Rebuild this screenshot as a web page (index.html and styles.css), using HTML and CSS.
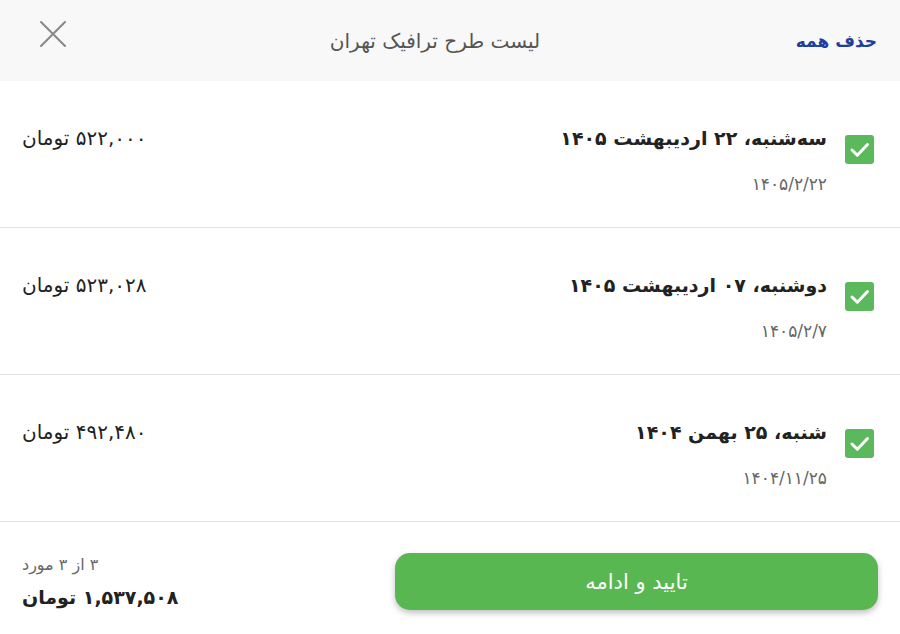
FILE: index.html
```html
<!DOCTYPE html>
<html lang="fa" dir="rtl">
<head>
<meta charset="utf-8">
<title>لیست طرح ترافیک تهران</title>
<link rel="stylesheet" href="styles.css">
</head>
<body>
<div class="page">
  <header class="header">
    <a class="clear-all">حذف همه</a>
    <div class="title">لیست طرح ترافیک تهران</div>
    <button class="close" aria-label="بستن">
      <svg width="28" height="28" viewBox="0 0 28 28"><path d="M2 2 L26 26 M26 2 L2 26" stroke="#8a8a8a" stroke-width="2.1" stroke-linecap="round" fill="none"/></svg>
    </button>
  </header>

  <ul class="list">
    <li class="row">
      <span class="check"><svg width="29" height="29" viewBox="0 0 29 29"><path d="M7 15 L12.3 20.2 L22.5 9.5" stroke="#fff" stroke-width="3" stroke-linecap="round" stroke-linejoin="round" fill="none"/></svg></span>
      <div class="info">
        <div class="day">سه‌شنبه، ۲۲ اردیبهشت ۱۴۰۵</div>
        <div class="date">۱۴۰۵/۲/۲۲</div>
      </div>
      <div class="price">۵۲۲,۰۰۰ تومان</div>
    </li>
    <li class="row">
      <span class="check"><svg width="29" height="29" viewBox="0 0 29 29"><path d="M7 15 L12.3 20.2 L22.5 9.5" stroke="#fff" stroke-width="3" stroke-linecap="round" stroke-linejoin="round" fill="none"/></svg></span>
      <div class="info">
        <div class="day">دوشنبه، ۰۷ اردیبهشت ۱۴۰۵</div>
        <div class="date">۱۴۰۵/۲/۷</div>
      </div>
      <div class="price">۵۲۳,۰۲۸ تومان</div>
    </li>
    <li class="row">
      <span class="check"><svg width="29" height="29" viewBox="0 0 29 29"><path d="M7 15 L12.3 20.2 L22.5 9.5" stroke="#fff" stroke-width="3" stroke-linecap="round" stroke-linejoin="round" fill="none"/></svg></span>
      <div class="info">
        <div class="day">شنبه، ۲۵ بهمن ۱۴۰۴</div>
        <div class="date">۱۴۰۴/۱۱/۲۵</div>
      </div>
      <div class="price">۴۹۲,۴۸۰ تومان</div>
    </li>
  </ul>

  <footer class="footer">
    <button class="confirm">تایید و ادامه</button>
    <div class="summary">
      <div class="count">۳ از ۳ مورد</div>
      <div class="total">۱,۵۳۷,۵۰۸ تومان</div>
    </div>
  </footer>
</div>
</body>
</html>
```

FILE: styles.css
```css
* { box-sizing: border-box; }
html, body { margin: 0; padding: 0; }
body {
  font-family: "DejaVu Sans", "Noto Sans", sans-serif;
  background: #ffffff;
  color: #222;
  width: 900px;
  height: 634px;
  overflow: hidden;
}
.page {
  display: flex;
  flex-direction: column;
  height: 634px;
}
.header {
  height: 81px;
  background: #f8f8f8;
  display: flex;
  align-items: center;
  justify-content: space-between;
  padding: 0 23px 0 39px;
}
.clear-all {
  color: #1f3f9c;
  font-size: 17px;
  font-weight: bold;
  width: 110px;
  text-align: right;
}
.title {
  color: #555;
  font-size: 20px;
  flex: 1;
  text-align: center;
  padding-right: 46px;
}
.close {
  border: 0;
  background: none;
  padding: 0;
  width: 110px;
  display: flex;
  justify-content: flex-end;
  margin-top: -14px;
}
.close svg { display: block; }
.list {
  list-style: none;
  margin: 0;
  padding: 0;
}
.row {
  height: 147px;
  border-bottom: 1.5px solid #e2e2e2;
  display: flex;
  align-items: flex-start;
  padding: 42px 26px 0 22px;
}
.check {
  width: 29px;
  height: 29px;
  border-radius: 3px;
  background: #5cb85c;
  margin-top: 12px;
  margin-left: 18px;
  flex: none;
}
.check svg { display: block; }
.info {
  flex: 1;
}
.day {
  font-size: 19px;
  font-weight: bold;
  line-height: 30px;
  color: #222;
}
.date {
  font-size: 17px;
  line-height: 24px;
  margin-top: 19px;
  color: #666;
}
.price {
  font-size: 20px;
  line-height: 30px;
  color: #222;
}
.footer {
  flex: 1;
  display: flex;
  align-items: flex-start;
  padding: 31px 22px 0 22px;
}
.confirm {
  width: 483px;
  height: 57px;
  border: 0;
  border-radius: 15px;
  background: #59b752;
  color: #fff;
  font-family: inherit;
  font-size: 21px;
  box-shadow: 0 3px 6px rgba(0,0,0,0.25);
}
.summary {
  flex: 1;
  display: flex;
  flex-direction: column;
  align-items: flex-end;
  padding-top: 1px;
}
.count {
  font-size: 16px;
  line-height: 22px;
  color: #666;
}
.total {
  font-size: 19px;
  font-weight: bold;
  line-height: 30px;
  margin-top: 6px;
  color: #222;
}
```
